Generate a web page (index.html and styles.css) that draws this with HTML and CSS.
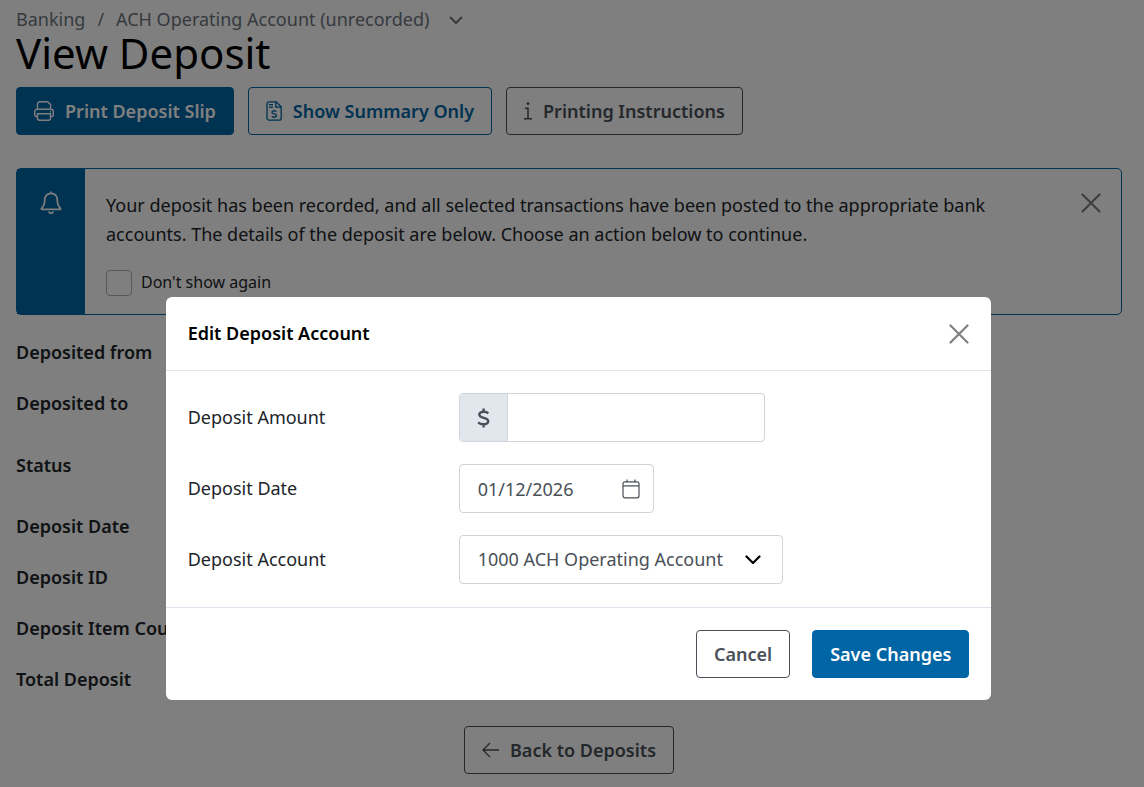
FILE: index.html
```html
<!DOCTYPE html>
<html lang="en">
<head>
    <meta charset="utf-8">
    <meta name="viewport" content="width=device-width, initial-scale=1">
    <title>View Deposit</title>
    <link rel="stylesheet" href="styles.css">
</head>
<body>
    <main class="page">
        <nav class="breadcrumb" aria-label="Breadcrumb">
            <a href="#">Banking</a>
            <span class="separator">/</span>
            <a href="#">ACH Operating Account (unrecorded)</a>
            <button type="button" class="icon-btn" aria-label="Switch account">
                <svg width="14" height="14" viewBox="0 0 14 14" fill="none" stroke="currentColor" stroke-width="2"><path d="M1 4l6 6 6-6"/></svg>
            </button>
        </nav>
        <h1>View Deposit</h1>

        <div class="toolbar">
            <button type="button" class="btn btn-primary">
                <svg width="20" height="20" viewBox="0 0 20 20" fill="none" stroke="currentColor" stroke-width="1.4"><path d="M3.5 8V3.2a2.4 2.4 0 0 1 2.4-2.4h7.6l3 2.6V8M3.5 15.5H2.2A1.5 1.5 0 0 1 .7 14v-3.4A2.4 2.4 0 0 1 3.1 8.2h13.8a2.4 2.4 0 0 1 2.4 2.4V14a1.5 1.5 0 0 1-1.5 1.5h-1.3M3.5 12.7h13v4.5a2 2 0 0 1-2 2h-9a2 2 0 0 1-2-2z"/><path d="M16 10.7h1"/></svg>
                Print Deposit Slip
            </button>
            <button type="button" class="btn btn-outline">
                <svg width="16" height="20" viewBox="0 0 16 20" fill="none" stroke="currentColor" stroke-width="1.3"><path d="M3 .8h7.2l5 4.9v11.5a2 2 0 0 1-2 2H3a2 2 0 0 1-2-2V2.8a2 2 0 0 1 2-2zM9.8 1v5.2H15M3 3.6h4M3 6.2h4"/><path d="M10.3 10.8c-.5-.6-1.3-.9-2.2-.9-1.3 0-2.1.6-2.1 1.5 0 2.1 4.5 1 4.5 3.1 0 1-.9 1.6-2.3 1.6-1 0-1.9-.4-2.4-1M8.1 8.7V10M8.1 16v1.3"/></svg>
                Show Summary Only
            </button>
            <button type="button" class="btn btn-secondary">
                <svg width="8" height="20" viewBox="0 0 8 20" fill="none" stroke="currentColor" stroke-width="1.5"><path d="M1 7.2h3v10.5M0 17.8h8"/><circle cx="4" cy="2.6" r="1.4" fill="currentColor" stroke="none"/></svg>
                Printing Instructions
            </button>
        </div>

        <section class="notice">
            <div class="notice-icon">
                <svg width="22" height="24" viewBox="0 0 22 24" fill="none" stroke="currentColor" stroke-width="1.7" stroke-linejoin="round"><path d="M11 .6v2M11 2.3c-3.7 0-6.3 2.8-6.3 6.4 0 5-1.1 6.7-3 8.5-.7.7-.4 1.2.3 1.2h18c.7 0 1-.5.3-1.2-1.9-1.8-3-3.5-3-8.5 0-3.6-2.6-6.4-6.3-6.4z"/><path d="M8.7 20.6a2.4 2.4 0 0 0 4.6 0"/></svg>
            </div>
            <div class="notice-body">
                <p>Your deposit has been recorded, and all selected transactions have been posted to the appropriate bank accounts. The details of the deposit are below. Choose an action below to continue.</p>
                <label class="check"><input type="checkbox"> Don't show again</label>
            </div>
            <button type="button" class="icon-btn close" aria-label="Dismiss">
                <svg width="20" height="20" viewBox="0 0 20 20" fill="none" stroke="currentColor" stroke-width="2.2" stroke-linecap="round"><path d="M1.5 1.5l17 17M18.5 1.5l-17 17"/></svg>
            </button>
        </section>

        <dl class="details">
            <dt>Deposited from</dt>
            <dt>Deposited to</dt>
            <dt class="status">Status</dt>
            <dt>Deposit Date</dt>
            <dt>Deposit ID</dt>
            <dt>Deposit Item Count</dt>
            <dt>Total Deposit</dt>
        </dl>

        <div class="page-footer">
            <button type="button" class="btn btn-secondary">
                <svg width="17" height="16" viewBox="0 0 17 16" fill="none" stroke="currentColor" stroke-width="1.3"><path d="M8 1L1 8l7 7M1 8h16"/></svg>
                Back to Deposits
            </button>
        </div>
    </main>

    <div class="backdrop">
        <form class="modal" role="dialog" aria-modal="true" aria-labelledby="modal-title">
            <header class="modal-header">
                <h2 id="modal-title">Edit Deposit Account</h2>
                <button type="button" class="icon-btn close" aria-label="Close">
                    <svg width="20" height="20" viewBox="0 0 20 20" fill="none" stroke="currentColor" stroke-width="2.2" stroke-linecap="round"><path d="M1.5 1.5l17 17M18.5 1.5l-17 17"/></svg>
                </button>
            </header>
            <div class="modal-body">
                <label for="amount">Deposit Amount</label>
                <div class="field amount">
                    <span class="prefix">
                        <svg width="13" height="20" viewBox="0 0 13 20" fill="none" stroke="currentColor" stroke-width="2.4"><path d="M11.3 5.3C10.2 4.2 8.6 3.7 6.8 3.7 4.1 3.7 2.3 4.8 2.3 6.6c0 4.3 8.9 2.3 8.9 6.5 0 2-1.8 3.2-4.6 3.2-2.1 0-4.2-.7-5.5-1.9M6.6.5v3.2M6.6 16.3v3.2"/></svg>
                    </span>
                    <input type="text" id="amount">
                </div>
                <label for="date">Deposit Date</label>
                <div class="field date">
                    <input type="text" id="date" value="01/12/2026">
                    <button type="button" class="icon-btn" aria-label="Choose date">
                        <svg width="18" height="20" viewBox="0 0 18 20" fill="none" stroke="currentColor" stroke-width="1.2"><rect x="1" y="2.8" width="16" height="16" rx="2"/><path d="M1 6.8h16M5 .5v2.8M13 .5v2.8"/></svg>
                    </button>
                </div>
                <label for="account">Deposit Account</label>
                <div class="field account">
                    <select id="account">
                        <option>1000 ACH Operating Account</option>
                    </select>
                    <svg width="16" height="10" viewBox="0 0 16 10" fill="none" stroke="currentColor" stroke-width="2.2" stroke-linecap="round" stroke-linejoin="round"><path d="M1.5 1.5L8 8l6.5-6.5"/></svg>
                </div>
            </div>
            <footer class="modal-footer">
                <button type="button" class="btn btn-secondary">Cancel</button>
                <button type="submit" class="btn btn-primary">Save Changes</button>
            </footer>
        </form>
    </div>
</body>
</html>
```
FILE: styles.css
```css
* {
    box-sizing: border-box;
}
body {
    margin: 0;
    font-family: "Noto Sans", sans-serif;
    font-size: 18px;
    line-height: 29px;
    color: #212529;
    background: white;
    overflow: hidden;
}
button, input, select {
    font: inherit;
    color: inherit;
}
svg {
    display: block;
    flex-shrink: 0;
}
.page {
    padding: 5px 22px 12px 16px;
}
.breadcrumb {
    display: flex;
    align-items: center;
    gap: 12px;
    color: #6c757d;
}
.breadcrumb a {
    color: inherit;
    text-decoration: none;
}
.breadcrumb .icon-btn {
    margin-left: 8px;
}
h1 {
    margin: 0;
    font-size: 42px;
    font-weight: 400;
    line-height: 38px;
    color: black;
}
.icon-btn {
    display: flex;
    padding: 0;
    border: none;
    background: none;
    cursor: pointer;
}
.close {
    color: #7f7f7f;
}
.toolbar {
    display: flex;
    gap: 14px;
    margin-top: 15px;
}
.btn {
    display: inline-flex;
    align-items: center;
    gap: 11px;
    height: 48px;
    padding: 0 17px;
    border: 1px solid #495057;
    border-radius: 4px;
    background: none;
    font-weight: 600;
    white-space: nowrap;
    cursor: pointer;
}
.btn-primary {
    background: #0065a4;
    border-color: #0065a4;
    color: white;
}
.btn-outline {
    border-color: #0065a4;
    color: #0065a4;
}
.btn-secondary {
    color: #495057;
}
.notice {
    display: flex;
    align-items: flex-start;
    margin-top: 33px;
    border: 1px solid #0065a4;
    border-radius: 5px;
}
.notice-icon {
    display: flex;
    justify-content: center;
    align-self: stretch;
    width: 68px;
    padding-top: 22px;
    background: #0065a4;
    color: white;
    flex-shrink: 0;
}
.notice-body {
    flex: 1;
    padding: 22px 22px 17px 21px;
}
.notice-body p {
    margin: 0 0 19px;
}
.notice .close {
    margin: 24px 20px 0;
}
.check {
    display: flex;
    align-items: center;
    gap: 9px;
    font-size: 16px;
}
.check input {
    appearance: none;
    width: 26px;
    height: 26px;
    margin: 0;
    border: 1px solid #adb5bd;
    border-radius: 4px;
}
.details {
    margin: 12px 0 21px;
    font-weight: 600;
}
.details dt {
    padding: 11px 0;
}
.details .status {
    padding: 22px 0 21px;
}
.page-footer {
    display: flex;
    justify-content: center;
}
.backdrop {
    position: fixed;
    inset: 0;
    display: flex;
    justify-content: center;
    align-items: flex-start;
    padding: 297px 0 0 13px;
    background: rgba(0, 0, 0, 0.5);
}
.modal {
    width: 73%;
    background: white;
    border-radius: 6px;
}
.modal-header {
    display: flex;
    justify-content: space-between;
    align-items: center;
    padding: 22px;
    border-bottom: 1px solid #dee5ee;
}
.modal-header h2 {
    margin: 0;
    font-size: 18px;
    font-weight: 600;
    color: black;
}
.modal-body {
    display: grid;
    grid-template-columns: 249px 1fr;
    gap: 22px;
    align-items: center;
    padding: 22px 22px 23px;
}
.field {
    display: flex;
    align-items: center;
    height: 49px;
    border: 1px solid #ced4da;
    border-radius: 4px;
    overflow: hidden;
    color: #495057;
}
.field input {
    flex: 1;
    min-width: 0;
    height: 100%;
    padding: 0 18px;
    border: none;
    outline: none;
    background: none;
}
.amount {
    width: 306px;
}
.prefix {
    display: flex;
    align-items: center;
    justify-content: center;
    align-self: stretch;
    width: 48px;
    background: #e2e7ee;
    border-right: 1px solid #ced4da;
}
.date {
    width: 195px;
    padding-right: 13px;
}
.account {
    display: grid;
    width: 324px;
}
.account select, .account svg {
    grid-area: 1 / 1;
}
.account select {
    appearance: none;
    height: 47px;
    padding: 0 48px 0 18px;
    border: none;
    background: none;
}
.account svg {
    justify-self: end;
    margin-right: 21px;
    color: black;
    pointer-events: none;
}
.modal-footer {
    display: flex;
    justify-content: flex-end;
    gap: 22px;
    padding: 22px;
    border-top: 1px solid #dee5ee;
}
```
